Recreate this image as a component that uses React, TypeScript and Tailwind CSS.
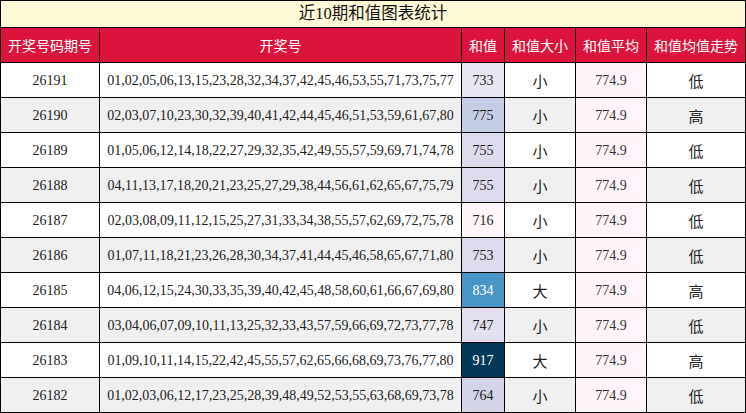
import React from "react";

const rows = [
  { q: "26191", n: "01,02,05,06,13,15,23,28,32,34,37,42,45,46,53,55,71,73,75,77", s: 733, cls: "bg-[#e8e6f2]", big: "小", tr: "低" },
  { q: "26190", n: "02,03,07,10,23,30,32,39,40,41,42,44,45,46,51,53,59,61,67,80", s: 775, cls: "bg-[#c5cde5]", big: "小", tr: "高" },
  { q: "26189", n: "01,05,06,12,14,18,22,27,29,32,35,42,49,55,57,59,69,71,74,78", s: 755, cls: "bg-[#dcdbec]", big: "小", tr: "低" },
  { q: "26188", n: "04,11,13,17,18,20,21,23,25,27,29,38,44,56,61,62,65,67,75,79", s: 755, cls: "bg-[#dcdbec]", big: "小", tr: "低" },
  { q: "26187", n: "02,03,08,09,11,12,15,25,27,31,33,34,38,55,57,62,69,72,75,78", s: 716, cls: "bg-[#fff7fb]", big: "小", tr: "低" },
  { q: "26186", n: "01,07,11,18,21,23,26,28,30,34,37,41,44,45,46,58,65,67,71,80", s: 753, cls: "bg-[#dedcec]", big: "小", tr: "低" },
  { q: "26185", n: "04,06,12,15,24,30,33,35,39,40,42,45,48,58,60,61,66,67,69,80", s: 834, cls: "bg-[#4896c7] text-white", big: "大", tr: "高" },
  { q: "26184", n: "03,04,06,07,09,10,11,13,25,32,33,43,57,59,66,69,72,73,77,78", s: 747, cls: "bg-[#e2e0ee]", big: "小", tr: "低" },
  { q: "26183", n: "01,09,10,11,14,15,22,42,45,55,57,62,65,66,68,69,73,76,77,80", s: 917, cls: "bg-[#023858] text-white", big: "大", tr: "高" },
  { q: "26182", n: "01,02,03,06,12,17,23,25,28,39,48,49,52,53,55,63,68,69,73,78", s: 764, cls: "bg-[#d3d4e8]", big: "小", tr: "低" },
];

const cell = "h-[35px] border-r border-b border-black flex items-center justify-center";
const cjk = "font-['Noto_Sans_CJK_SC',sans-serif]";

export default function App() {
  return (
    <div className="w-[746px] h-[413px] bg-white text-[#222] font-['Liberation_Serif','Noto_Sans_CJK_SC',serif]">
      <div className="border-l border-t border-black">
        <div className="h-[27px] border-r border-b border-black bg-[#fffad6] flex items-center justify-center text-[16.5px] text-[#111]">
          近10期和值图表统计
        </div>
        <div className="grid grid-cols-[99px_362px_43px_71px_71px_99px]">
          {["开奖号码期号", "开奖号", "和值", "和值大小", "和值平均", "和值均值走势"].map((h) => (
            <div key={h} className={`${cell} bg-[#dc143c] text-white text-[14px] ${cjk}`}>
              {h}
            </div>
          ))}
          {rows.map((r, i) => {
            const rowBg = i % 2 === 0 ? "bg-white" : "bg-[#f0f0f0]";
            return (
              <React.Fragment key={r.q}>
                <div className={`${cell} ${rowBg} text-[14px]`}>{r.q}</div>
                <div className={`${cell} ${rowBg} text-[14px]`}>{r.n}</div>
                <div className={`${cell} ${r.cls} text-[14px]`}>{r.s}</div>
                <div className={`${cell} ${rowBg} text-[15px] pt-[3px] ${cjk}`}>{r.big}</div>
                <div className={`${cell} bg-[#fff5fa] text-[14px] text-[#333]`}>774.9</div>
                <div className={`${cell} ${rowBg} text-[15px] pt-[3px] ${cjk}`}>{r.tr}</div>
              </React.Fragment>
            );
          })}
        </div>
      </div>
    </div>
  );
}
